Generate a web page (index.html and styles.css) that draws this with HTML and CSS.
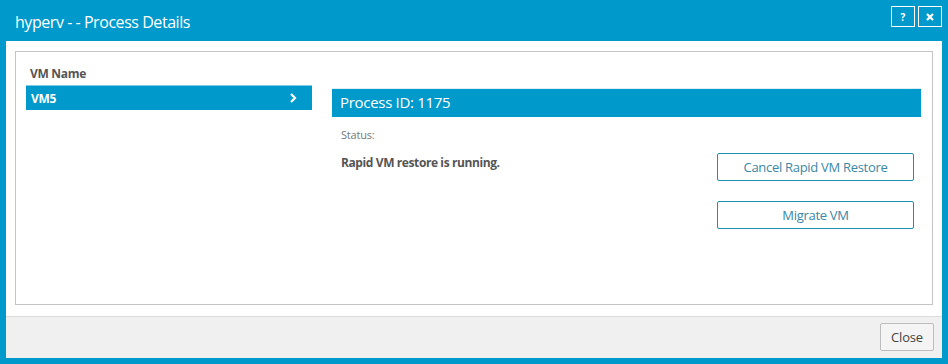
FILE: index.html
```html
<!DOCTYPE html>
<html lang="en">
<head>
    <meta charset="UTF-8">
    <title>Process Details</title>
    <link rel="stylesheet" href="styles.css">
</head>
<body>
    <div class="dialog">
        <div class="titlebar">
            <span class="title">hyperv - - Process Details</span>
            <div class="title-buttons">
                <button class="tb-btn" type="button">?</button>
                <button class="tb-btn" type="button">
                    <svg width="8" height="8" viewBox="0 0 8 8"><path d="M1 1L7 7M7 1L1 7" stroke="#fff" stroke-width="2.2"/></svg>
                </button>
            </div>
        </div>
        <div class="body">
            <div class="panel">
                <div class="vm-list">
                    <div class="vm-head">VM Name</div>
                    <div class="vm-row selected">
                        <span>VM5</span>
                        <svg width="8" height="10" viewBox="0 0 8 10"><path d="M2 1L6 5L2 9" fill="none" stroke="#fff" stroke-width="2.2"/></svg>
                    </div>
                </div>
                <div class="details">
                    <div class="proc-head">Process ID: 1175</div>
                    <div class="status-label">Status:</div>
                    <div class="status-row">
                        <div class="status-text">Rapid VM restore is running.</div>
                        <div class="actions">
                            <button class="action-btn" type="button">Cancel Rapid VM Restore</button>
                            <button class="action-btn" type="button">Migrate VM</button>
                        </div>
                    </div>
                </div>
            </div>
            <div class="footer">
                <button class="close-btn" type="button">Close</button>
            </div>
        </div>
    </div>
</body>
</html>
```

FILE: styles.css
```css
body {
    margin: 0;
    font-family: "Open Sans", Arial, sans-serif;
}
.dialog {
    width: 948px;
    height: 364px;
    box-sizing: border-box;
    background-color: #0099cb;
    padding: 0 6px 6px 6px;
    display: flex;
    flex-direction: column;
}
.titlebar {
    height: 41px;
    display: flex;
    justify-content: space-between;
    align-items: flex-start;
}
.title {
    color: #fff;
    font-size: 16px;
    letter-spacing: -0.45px;
    margin: 11px 0 0 9px;
}
.title-buttons {
    display: flex;
    gap: 3px;
    margin-top: 6px;
}
.tb-btn {
    width: 24px;
    height: 21px;
    border: 1px solid #fff;
    background: transparent;
    color: #fff;
    font-family: "Open Sans", Arial, sans-serif;
    font-weight: bold;
    font-size: 10px;
    padding: 0;
    display: flex;
    align-items: center;
    justify-content: center;
}
.body {
    flex: 1;
    background-color: #fff;
    display: flex;
    flex-direction: column;
}
.panel {
    margin: 10px 9px 0 9px;
    height: 254px;
    box-sizing: border-box;
    border: 1px solid #c4c4c4;
    display: flex;
    padding: 0 11px 0 10px;
}
.vm-list {
    width: 286px;
    margin-right: 20px;
}
.vm-head {
    color: #555;
    font-size: 12px;
    font-weight: bold;
    letter-spacing: -0.3px;
    margin: 13px 0 0 4px;
    height: 20px;
}
.vm-row {
    height: 25px;
    box-sizing: border-box;
    display: flex;
    align-items: center;
    justify-content: space-between;
    padding: 0 15px 0 5px;
    color: #fff;
    font-size: 12px;
    font-weight: bold;
    letter-spacing: -0.3px;
}
.vm-row.selected {
    background-color: #0099cb;
    border-top: 1px solid #7fcbe5;
}
.details {
    flex: 1;
    padding-top: 36px;
}
.proc-head {
    height: 29px;
    box-sizing: border-box;
    background-color: #0099cb;
    border-top: 1px solid #d9eef6;
    color: #fff;
    font-size: 15px;
    letter-spacing: -0.3px;
    padding: 3px 8px 0 8px;
}
.status-label {
    color: #777;
    font-size: 11px;
    letter-spacing: -0.2px;
    margin: 10px 0 0 9px;
}
.status-row {
    display: flex;
    justify-content: space-between;
    margin-top: 11px;
}
.status-text {
    color: #555;
    font-size: 12px;
    font-weight: bold;
    letter-spacing: -0.4px;
    margin: 1px 0 0 9px;
}
.actions {
    display: flex;
    flex-direction: column;
    gap: 20px;
    margin-right: 7px;
}
.action-btn {
    width: 197px;
    height: 28px;
    border: 1px solid #1c8fb3;
    border-radius: 2px;
    background: #fff;
    color: #3a87a6;
    font-family: "Open Sans", Arial, sans-serif;
    font-size: 13px;
    letter-spacing: -0.3px;
}
.footer {
    margin-top: 11px;
    flex: 1;
    border-top: 1px solid #dcdcdc;
    background-color: #f0f0f0;
    display: flex;
    justify-content: flex-end;
    align-items: flex-start;
}
.close-btn {
    margin: 6px 8px 0 0;
    width: 54px;
    height: 28px;
    border: 1px solid #bdbdbd;
    border-radius: 2px;
    background: #f4f4f4;
    color: #444;
    font-family: "Open Sans", Arial, sans-serif;
    font-size: 13px;
    letter-spacing: -0.2px;
}
```
